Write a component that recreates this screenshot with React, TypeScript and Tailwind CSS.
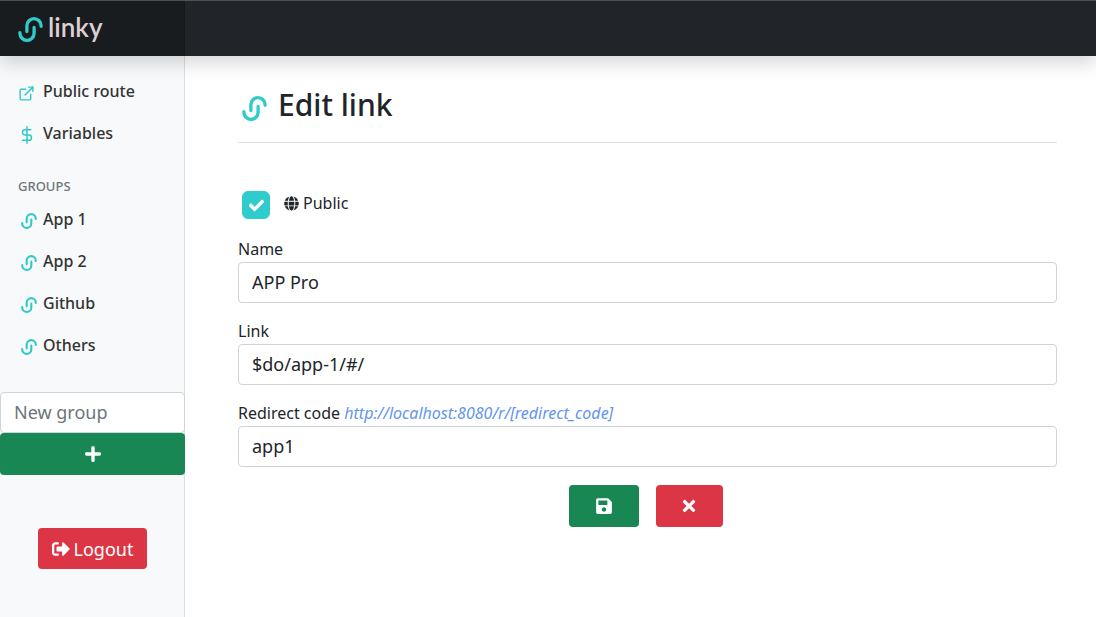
import type { ReactNode } from "react";
import { FiDollarSign, FiExternalLink } from "react-icons/fi";
import { FaCheck, FaGlobe, FaPlus, FaSave, FaSignOutAlt, FaTimes } from "react-icons/fa";

function LinkyMark({ className }: { className: string }) {
  return (
    <svg viewBox="0 0 25 25" className={className} fill="none" stroke="currentColor" strokeWidth="3.3" strokeLinecap="round" aria-hidden="true">
      <path d="M8.9 14.6V8.7a7.1 7 0 0 1 14.2 0V9.3" />
      <path d="M16.1 10.4v5.9a7.1 7 0 0 1-14.2 0V15.7" />
    </svg>
  );
}

function NavItem({ icon, children }: { icon: ReactNode; children: ReactNode }) {
  return (
    <li>
      <a href="#" className="flex items-center px-4 py-2 leading-[26px] font-medium text-[#333333]">
        <span className="flex w-[27px] shrink-0 pt-1 text-[#2fc9c9]">{icon}</span>
        {children}
      </a>
    </li>
  );
}

function Field({ id, label, hint, value }: { id: string; label: string; hint?: string; value: string }) {
  return (
    <div>
      <label htmlFor={id} className="block leading-[25px]">
        {label} {hint && <em className="text-[#6495ed]">{hint}</em>}
      </label>
      <input id={id} defaultValue={value} className="block h-[41px] w-full rounded border border-[#ced4da] bg-white px-[13px] pb-px text-lg outline-none" />
    </div>
  );
}

const groups = ["App 1", "App 2", "Github", "Others"];

export default function App() {
  return (
    <div className="flex min-h-screen flex-col bg-white font-['Noto_Sans',sans-serif] text-base text-[#212529]">
      <header className="relative z-10 flex h-14 border-t border-[#4d5154] bg-[#212529] shadow-[0_8px_16px_rgba(0,0,0,0.15)]">
        <a href="#" className="flex w-[185px] items-center gap-[5px] border-r border-[#15181a] bg-[#191c1f] pl-[18px] text-[#ddd0d3]">
          <LinkyMark className="mt-0.5 size-[25px] text-[#30cbcd]" />
          <span className="pb-1 font-['Lato',sans-serif] text-[26px] leading-8 font-semibold">linky</span>
        </a>
      </header>
      <div className="flex grow">
        <nav className="w-[185px] shrink-0 border-r border-[#dcdddf] bg-[#f8f9fa] pt-3.5">
          <ul>
            <NavItem icon={<FiExternalLink className="ml-0.5 size-[17px]" />}>Public route</NavItem>
            <NavItem icon={<FiDollarSign className="ml-0.5 size-[18px]" />}>Variables</NavItem>
          </ul>
          <h2 className="mt-[22px] mb-0.5 px-[18px] text-[13px] leading-5 font-medium text-[#6c757d]">GROUPS</h2>
          <ul>
            {groups.map((group) => (
              <NavItem key={group} icon={<LinkyMark className="ml-[5px] size-4" />}>{group}</NavItem>
            ))}
          </ul>
          <form className="mt-[26px] -mr-px" onSubmit={(event) => event.preventDefault()}>
            <input aria-label="New group" placeholder="New group" className="block h-[41px] w-full rounded border border-[#ced4da] bg-white px-[13px] pb-px text-lg outline-none placeholder:text-[#6c757d]" />
            <button aria-label="Add group" className="flex h-[42px] w-full items-center justify-center rounded bg-[#198754] text-lg text-white">
              <FaPlus />
            </button>
          </form>
          <div className="mt-[53px] -mr-px flex justify-center">
            <button className="flex h-[41px] items-center gap-1 rounded bg-[#dc3545] px-3.5 text-lg text-white">
              <FaSignOutAlt />
              Logout
            </button>
          </div>
        </nav>
        <main className="min-w-0 grow pt-[31px] pr-[39px] pl-[53px]">
          <h1 className="flex items-center gap-[11px] border-b border-[#dee2e6] px-1 pb-[19px] text-3xl leading-9 font-medium">
            <LinkyMark className="mt-1.5 size-[25px] text-[#30cbcd]" />
            Edit link
          </h1>
          <form className="mt-12" onSubmit={(event) => event.preventDefault()}>
            <label className="flex items-center gap-3.5 px-1">
              <span className="grid size-7">
                <input type="checkbox" defaultChecked className="peer col-start-1 row-start-1 size-7 appearance-none rounded-md border border-[#30cbcd] checked:bg-[#30cbcd]" />
                <FaCheck className="pointer-events-none invisible col-start-1 row-start-1 size-[15px] place-self-center stroke-white stroke-[24] text-white peer-checked:visible" />
              </span>
              <span className="flex items-center gap-1 pb-1">
                <FaGlobe className="size-[15px]" />
                Public
              </span>
            </label>
            <div className="mt-[18px] flex flex-col gap-4">
              <Field id="name" label="Name" value="APP Pro" />
              <Field id="link" label="Link" value="$do/app-1/#/" />
              <Field id="redirect" label="Redirect code" hint="http://localhost:8080/r/[redirect_code]" value="app1" />
            </div>
            <div className="mt-[18px] flex justify-center gap-[17px] pr-1">
              <button aria-label="Save" className="flex h-[42px] w-[70px] items-center justify-center rounded bg-[#198754] text-lg text-white">
                <FaSave />
              </button>
              <button aria-label="Cancel" className="flex h-[42px] w-[67px] items-center justify-center rounded bg-[#dc3545] text-lg text-white">
                <FaTimes />
              </button>
            </div>
          </form>
        </main>
      </div>
    </div>
  );
}
